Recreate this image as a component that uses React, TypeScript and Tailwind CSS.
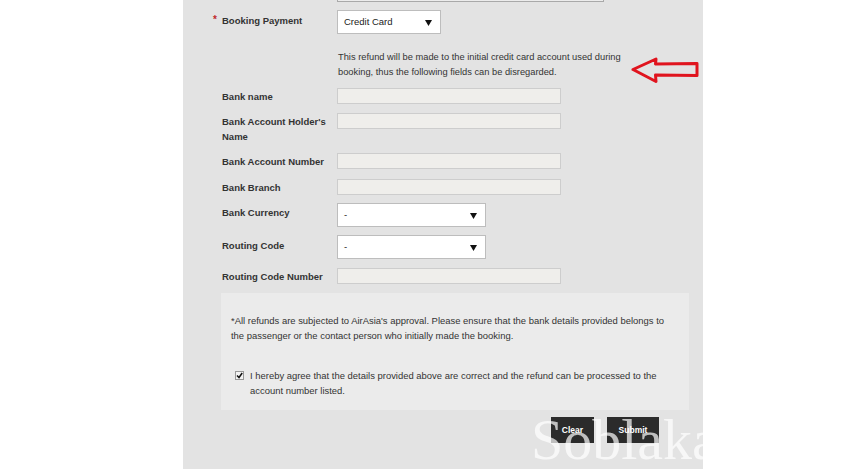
import React from "react";

const font = { fontFamily: '"Liberation Sans", Arial, sans-serif' };

function Label({ children }: { children: React.ReactNode }) {
  return (
    <div className="w-[115px] shrink-0 text-[9.5px] font-bold leading-[15px] text-[#333]">
      {children}
    </div>
  );
}

function TextInput() {
  return <div className="h-[16px] w-[224px] border border-[#cdcdcd] bg-[#efeeeb]" />;
}

function Arrow() {
  return (
    <svg width="7" height="7" viewBox="0 0 7 7" className="block">
      <path d="M0 1 H7 L3.5 7 Z" fill="#111" />
    </svg>
  );
}

function Select({ value, width }: { value: string; width: string }) {
  return (
    <div
      className={`flex h-[24px] ${width} items-center justify-between border border-[#bdbdbd] bg-white pl-[6px] pr-[8px] text-[9.5px] text-[#222]`}
    >
      <span>{value}</span>
      <Arrow />
    </div>
  );
}

export default function App() {
  return (
    <div className="relative h-[469px] w-[850px] overflow-hidden bg-white" style={font}>
      <div className="relative ml-[183px] h-[469px] w-[520px] bg-[#e3e3e3]">
        {/* top input remnant */}
        <div className="ml-[154px] h-[2px] w-[267px] border-x border-b border-[#a9a9a9] bg-[#ececec]" />

        {/* Booking Payment */}
        <div className="mt-[8px] flex items-center">
          <div className="-mt-[4px] ml-[30px] w-[9px] text-[10px] font-bold leading-[10px] text-[#c0292b]">*</div>
          <Label>
            <div className="-mt-[3px]">Booking Payment</div>
          </Label>
          <Select value="Credit Card" width="w-[104px]" />
        </div>

        {/* paragraph */}
        <div className="ml-[155px] mt-[16px] w-[320px] text-[9.3px] leading-[15px] text-[#333]">
          This refund will be made to the initial credit card account used during
          <br />
          booking, thus the following fields can be disregarded.
        </div>

        {/* Bank name */}
        <div className="ml-[39px] mt-[8px] flex items-start">
          <Label>
            <div className="pt-[1px]">Bank name</div>
          </Label>
          <TextInput />
        </div>

        {/* Holder name */}
        <div className="ml-[39px] mt-[9px] flex items-start">
          <Label>
            <div className="pt-[1px]">
              Bank Account Holder's
              <br />
              Name
            </div>
          </Label>
          <TextInput />
        </div>

        {/* Account number */}
        <div className="ml-[39px] mt-[9px] flex items-start">
          <Label>
            <div className="pt-[1px]">Bank Account Number</div>
          </Label>
          <TextInput />
        </div>

        {/* Branch */}
        <div className="ml-[39px] mt-[10px] flex items-start">
          <Label>
            <div className="pt-[1px]">Bank Branch</div>
          </Label>
          <TextInput />
        </div>

        {/* Currency */}
        <div className="ml-[39px] mt-[8px] flex items-center">
          <Label>
            <div className="-mt-[5px]">Bank Currency</div>
          </Label>
          <Select value="-" width="w-[149px]" />
        </div>

        {/* Routing */}
        <div className="ml-[39px] mt-[8px] flex items-center">
          <Label>
            <div className="-mt-[4px]">Routing Code</div>
          </Label>
          <Select value="-" width="w-[149px]" />
        </div>

        {/* Routing number */}
        <div className="ml-[39px] mt-[9px] flex items-start">
          <Label>
            <div className="pt-[1px]">Routing Code Number</div>
          </Label>
          <TextInput />
        </div>

        {/* info box */}
        <div className="ml-[38px] mt-[9px] h-[117px] w-[468px] bg-[#ebebeb] pl-[10px] pt-[20px] text-[9.45px] leading-[15px] text-[#333]">
          <p className="whitespace-nowrap">
            *All refunds are subjected to AirAsia's approval. Please ensure that the bank details provided belongs to
            <br />
            the passenger or the contact person who initially made the booking.
          </p>
          <div className="mt-[25px] flex items-start">
            <div className="ml-[4px] mr-[6px] mt-[3px] flex h-[9px] w-[9px] items-center justify-center border border-[#999] bg-[#f4f4f4]">
              <svg width="7" height="7" viewBox="0 0 7 7">
                <path d="M1 3.5 L3 5.5 L6.2 1" stroke="#111" strokeWidth="1.5" fill="none" />
              </svg>
            </div>
            <p className="whitespace-nowrap">
              I hereby agree that the details provided above are correct and the refund can be processed to the
              <br />
              account number listed.
            </p>
          </div>
        </div>

        {/* buttons */}
        <div className="ml-[368px] mt-[7px] flex gap-[13px]">
          <div className="flex h-[26px] w-[43px] items-center justify-center bg-[#2b2b2b] text-[8.5px] font-bold text-white">
            Clear
          </div>
          <div className="flex h-[26px] w-[52px] items-center justify-center bg-[#2b2b2b] text-[8.5px] font-bold text-white">
            Submit
          </div>
        </div>

        {/* red annotation arrow */}
        <svg
          className="absolute left-[448px] top-[57px]"
          width="70"
          height="27"
          viewBox="0 0 70 27"
        >
          <path
            d="M2 12.5 L25 2 L24.5 7 L66 6.5 L66 18.5 L24.5 18 L25 24.5 Z"
            fill="none"
            stroke="#e0141e"
            strokeWidth="3"
            strokeLinejoin="round"
          />
        </svg>
      </div>

      {/* watermark */}
      <div
        className="pointer-events-none absolute left-[531px] top-[411px] text-[58px] leading-none text-white/70"
        style={{ fontFamily: '"Liberation Serif", "Times New Roman", serif' }}
      >
        Soblaka
      </div>
    </div>
  );
}
